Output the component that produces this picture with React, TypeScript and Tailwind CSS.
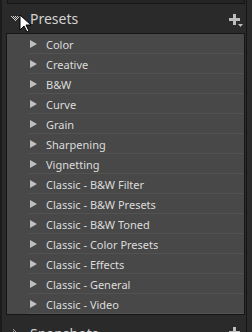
import React from "react";

const presets = [
  "Color",
  "Creative",
  "B&W",
  "Curve",
  "Grain",
  "Sharpening",
  "Vignetting",
  "Classic - B&W Filter",
  "Classic - B&W Presets",
  "Classic - B&W Toned",
  "Classic - Color Presets",
  "Classic - Effects",
  "Classic - General",
  "Classic - Video",
];

// dotted triangle used by Lightroom panel headers
const DottedDown = () => {
  const dots: React.ReactNode[] = [];
  for (let r = 0; r < 6; r++) {
    for (let c = r; c < 10 - r; c++) {
      if ((r + c) % 2 === 0) dots.push(<rect key={`${r}-${c}`} x={c} y={r} width={1} height={1} />);
    }
  }
  return (
    <svg width="10" height="6" viewBox="0 0 10 6" fill="#d0d0d0">
      {dots}
    </svg>
  );
};

const DottedRight = () => {
  const dots: React.ReactNode[] = [];
  for (let c = 0; c < 5; c++) {
    for (let r = c; r < 9 - c; r++) {
      if ((r + c) % 2 === 0) dots.push(<rect key={`${r}-${c}`} x={c} y={r} width={1} height={1} />);
    }
  }
  return (
    <svg width="5" height="9" viewBox="0 0 5 9" fill="#a0a0a0">
      {dots}
    </svg>
  );
};

const PlusIcon = ({ caret }: { caret?: boolean }) => (
  <svg width="14" height="13" viewBox="0 0 14 13">
    <rect x="4" y="0" width="3" height="11" fill="#bdbdbd" />
    <rect x="0" y="4" width="11" height="3" fill="#bdbdbd" />
    {caret && <path d="M9 10h5l-2.5 3z" fill="#bdbdbd" />}
  </svg>
);

const Cursor = () => (
  <svg width="12" height="19" viewBox="0 0 12 19" className="absolute left-[17px] top-[14px]">
    <path d="M1 1v15l4-4 3 6 2-1-3-6h5z" fill="#fff" stroke="#000" strokeWidth="1" />
  </svg>
);

export default function App() {
  return (
    <div
      className="relative w-[252px] h-[332px] overflow-hidden bg-[#2a2a2a] border-l-2 border-[#1b1b1b]"
      style={{ fontFamily: '"Noto Sans", "Open Sans", sans-serif' }}
    >
      <div className="w-[245px] h-full border-r border-[#161616] flex flex-col">
        {/* bottom of previous panel */}
        <div className="shrink-0 ml-[5px] mr-[1px] h-[4px] bg-[#242424] border-x border-b border-[#151515]" />

        {/* Presets header */}
        <div className="shrink-0 h-[29px] flex items-center pl-[9px] pr-[3px] pt-[1px]">
          <div className="w-[19px] flex items-center">
            <DottedDown />
          </div>
          <span className="text-[14px] text-[#d2d2d2] leading-none">Presets</span>
          <div className="ml-auto pt-[2px]">
            <PlusIcon caret />
          </div>
        </div>

        {/* list */}
        <div className="shrink-0 ml-[4px] mr-[1px] border border-[#161616] bg-[#484848]">
          {presets.map((p) => (
            <div key={p} className="h-[20px] flex items-center pl-[23px] relative">
              <svg width="7" height="8" viewBox="0 0 7 8" className="mr-[9px]">
                <path d="M0 0l7 4-7 4z" fill="#bfbfbf" />
              </svg>
              <span className="text-[11px] text-[#dcdcdc] leading-none">{p}</span>
              <div className="absolute left-[21px] right-0 bottom-0 h-px bg-[#525252]" />
            </div>
          ))}
        </div>

        {/* Snapshots header */}
        <div className="shrink-0 h-[29px] flex items-center pl-[9px] pr-[3px] pt-[8px]">
          <div className="w-[19px] flex items-center pl-[2px]">
            <DottedRight />
          </div>
          <span className="text-[14px] text-[#d2d2d2] leading-none">Snapshots</span>
          <div className="ml-auto">
            <PlusIcon />
          </div>
        </div>
      </div>
      <Cursor />
    </div>
  );
}
